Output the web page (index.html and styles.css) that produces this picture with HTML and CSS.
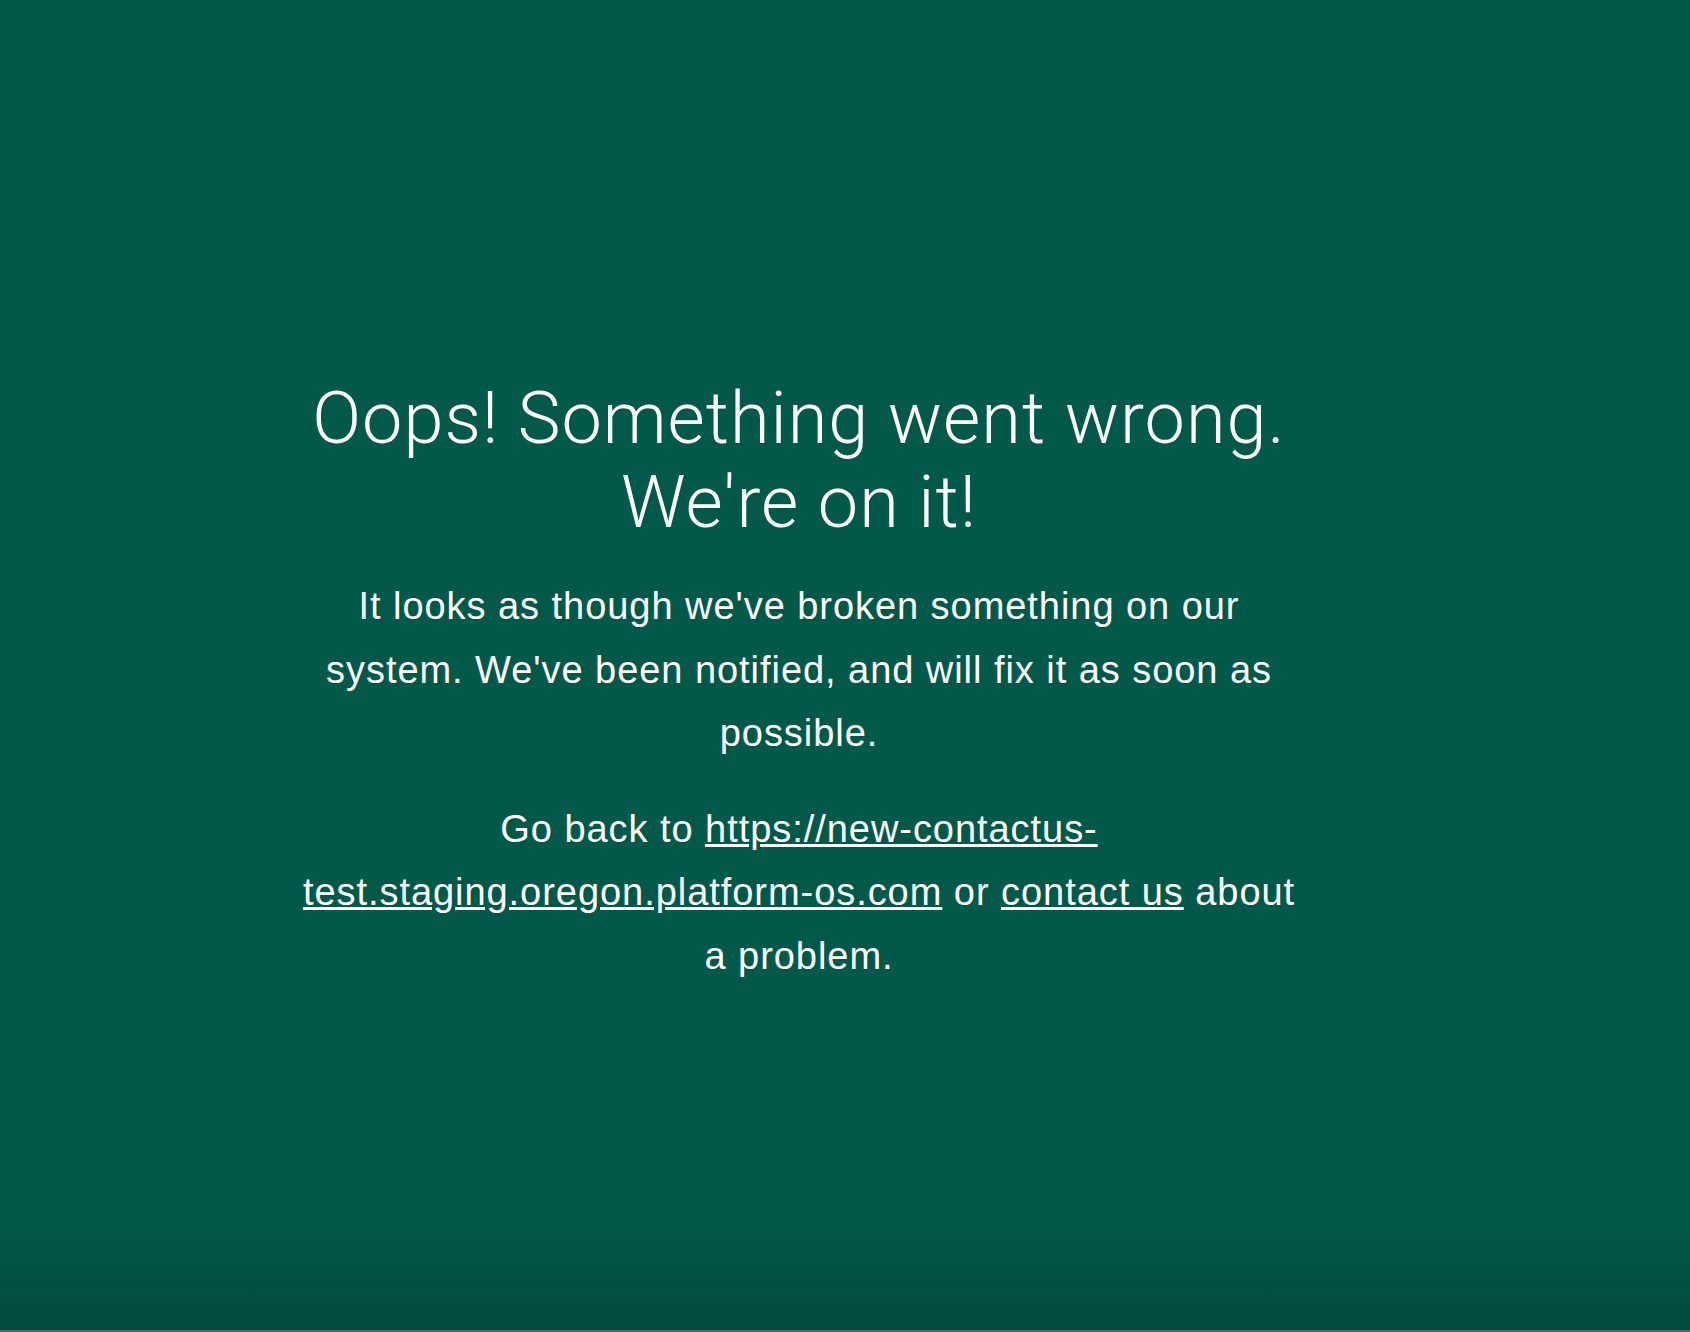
FILE: index.html
```html
<!DOCTYPE html>
<html lang="en">
<head>
<meta charset="utf-8">
<title>Something went wrong</title>
<link rel="stylesheet" href="styles.css">
</head>
<body>
<main class="page">
  <div class="content">
    <h1 class="title">Oops! Something went wrong.<br>We're on it!</h1>
    <p class="text">It looks as though we've broken something on our system. We've been notified, and will fix it as soon as possible.</p>
    <p class="text">Go back to <a class="link" href="#">https://new-contactus-test.staging.oregon.platform-os.com</a> or <a class="link" href="#">contact us</a> about a problem.</p>
  </div>
</main>
</body>
</html>
```

FILE: styles.css
```css
html, body {
  margin: 0;
  padding: 0;
  height: 100%;
}

body {
  background: linear-gradient(to bottom, #02594a 0, #02594a calc(100% - 110px), #014b3e calc(100% - 2px), #456d62 calc(100% - 2px), #456d62 100%);
  color: #ffffff;
  font-family: "Liberation Sans", Arial, sans-serif;
}

.page {
  min-height: 100vh;
  box-sizing: border-box;
  display: flex;
  justify-content: center;
  padding-right: 92px;
}

.content {
  width: 1000px;
  padding-top: 377px;
  text-align: center;
}

.title {
  margin: 0 0 30px;
  font-family: Roboto, "Liberation Sans", sans-serif;
  font-weight: 300;
  font-size: 72px;
  line-height: 84px;
  letter-spacing: 1px;
}

.text {
  margin: 0 0 32px;
  font-size: 38px;
  line-height: 63.5px;
  letter-spacing: 0.95px;
}

.link {
  color: #ffffff;
  text-decoration: underline;
}
```
